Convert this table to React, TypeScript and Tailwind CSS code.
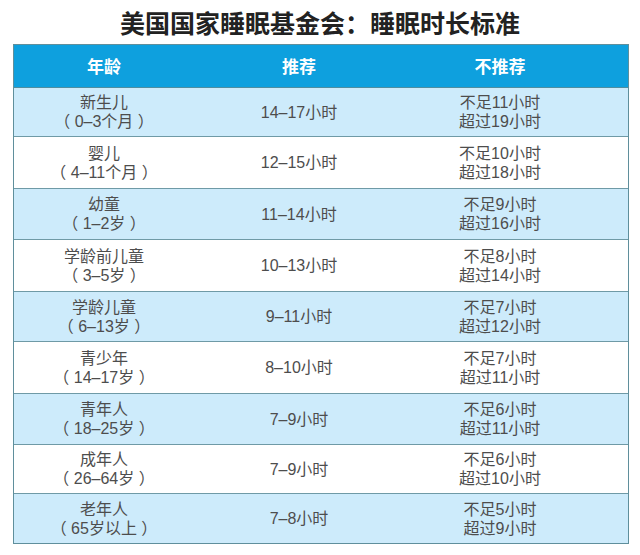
import React from "react";

const rows: { a1: string; a2: string; rec: string; n1: string; n2: string; h: number }[] = [
  { a1: "新生儿", a2: "（ 0–3个月 ）", rec: "14–17小时", n1: "不足11小时", n2: "超过19小时", h: 49 },
  { a1: "婴儿", a2: "（ 4–11个月 ）", rec: "12–15小时", n1: "不足10小时", n2: "超过18小时", h: 52 },
  { a1: "幼童", a2: "（ 1–2岁 ）", rec: "11–14小时", n1: "不足9小时", n2: "超过16小时", h: 51 },
  { a1: "学龄前儿童", a2: "（ 3–5岁 ）", rec: "10–13小时", n1: "不足8小时", n2: "超过14小时", h: 52 },
  { a1: "学龄儿童", a2: "（ 6–13岁 ）", rec: "9–11小时", n1: "不足7小时", n2: "超过12小时", h: 50 },
  { a1: "青少年", a2: "（ 14–17岁 ）", rec: "8–10小时", n1: "不足7小时", n2: "超过11小时", h: 52 },
  { a1: "青年人", a2: "（ 18–25岁 ）", rec: "7–9小时", n1: "不足6小时", n2: "超过11小时", h: 51 },
  { a1: "成年人", a2: "（ 26–64岁 ）", rec: "7–9小时", n1: "不足6小时", n2: "超过10小时", h: 49 },
  { a1: "老年人", a2: "（ 65岁以上 ）", rec: "7–8小时", n1: "不足5小时", n2: "超过9小时", h: 49 },
];

export default function App() {
  return (
    <div
      className="w-[640px] h-[555px] bg-white overflow-hidden"
      style={{ fontFamily: '"Noto Sans CJK SC", "Noto Sans", sans-serif' }}
    >
      <div className="h-[44px] flex items-start justify-center pt-[5px]">
        <div className="text-[25px] leading-[34px] font-bold text-[#222222]">
          美国国家睡眠基金会：睡眠时长标准
        </div>
      </div>
      <div className="ml-[13px] w-[616px] border border-[#5f8f9c]">
        <div className="grid grid-cols-[180px_210px_1fr] h-[43px] bg-[#0ea0de] text-white text-[17px] font-bold items-center border-b border-[#4f8ea0]">
          <div className="text-center">年龄</div>
          <div className="text-center">推荐</div>
          <div className="text-center pr-[32px]">不推荐</div>
        </div>
        {rows.map((r, i) => (
          <div
            key={i}
            className={
              "grid grid-cols-[180px_210px_1fr] items-center text-[16px] leading-[19px] text-[#4d4d4d] " +
              (i % 2 === 0 ? "bg-[#cdebfb] " : "bg-white ") +
              (i < rows.length - 1 ? "border-b border-[#6f9aa6]" : "")
            }
            style={{ height: r.h, fontFamily: '"Liberation Sans", "Noto Sans CJK SC", sans-serif' }}
          >
            <div className="flex flex-col items-center">
              <div>{r.a1}</div>
              <div className="whitespace-pre">{r.a2}</div>
            </div>
            <div className="text-center">{r.rec}</div>
            <div className="flex flex-col items-center pr-[32px]">
              <div>{r.n1}</div>
              <div>{r.n2}</div>
            </div>
          </div>
        ))}
      </div>
    </div>
  );
}
